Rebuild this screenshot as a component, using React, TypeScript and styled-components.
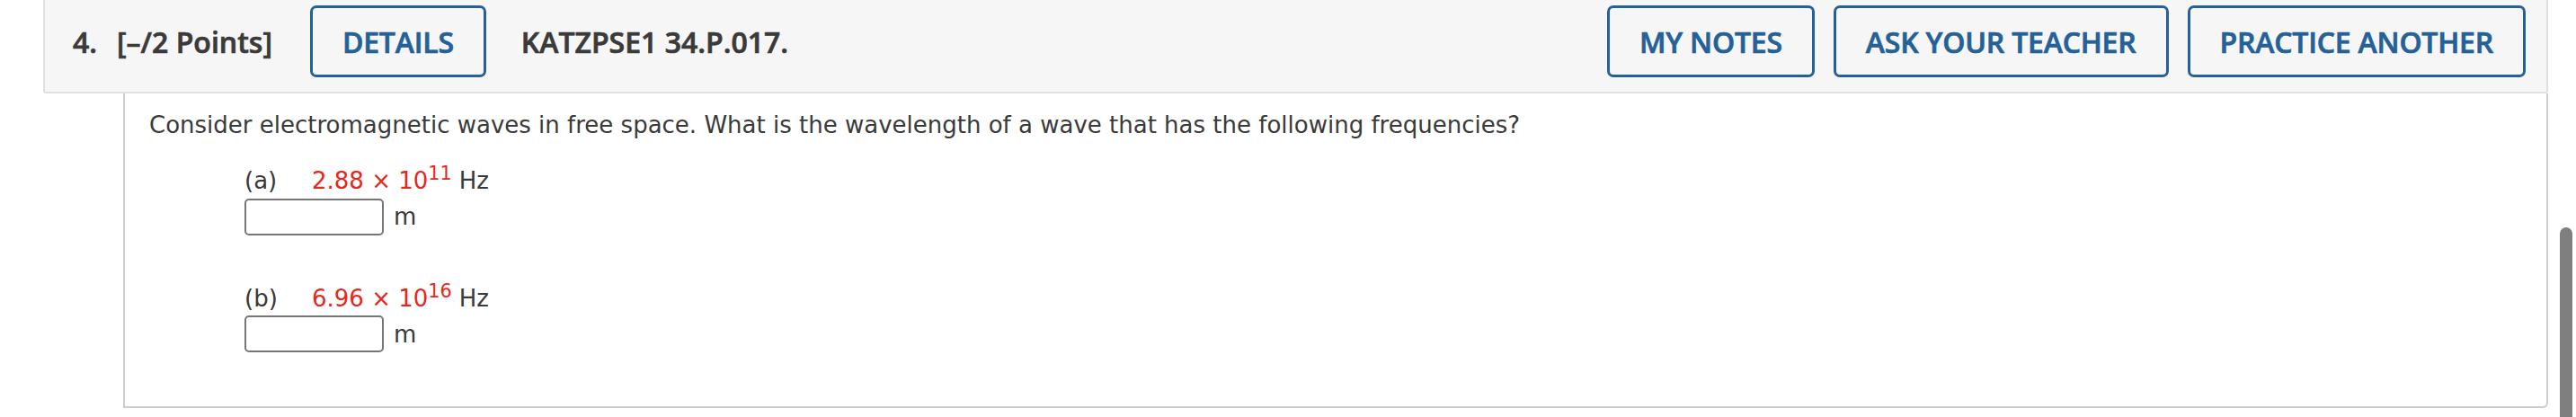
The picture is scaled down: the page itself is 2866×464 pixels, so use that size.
import React from "react";
import styled, { createGlobalStyle } from "styled-components";

const GlobalStyle = createGlobalStyle`
  html, body { margin: 0; padding: 0; background: #ffffff; }
  body { font-family: "DejaVu Sans", Verdana, sans-serif; overflow: hidden; }
`;

const Page = styled.div`
  padding: 0 31px 0 48px;
  width: 2866px;
  height: 464px;
  box-sizing: border-box;
`;

const Header = styled.div`
  display: flex;
  align-items: center;
  height: 104px;
  box-sizing: border-box;
  padding: 0 23px 10px 31px;
  background: #f6f6f6;
  border: 2px solid #e0e0e0;
  border-top: none;
  border-radius: 0 0 3px 3px;
  font-family: "Open Sans", "Liberation Sans", sans-serif;
  font-weight: 600;
  font-size: 32px;
  color: #3a3a3a;
  -webkit-text-stroke: 0.7px currentColor;
`;

const QNum = styled.span`
  margin-right: 22px;
`;

const Points = styled.span`
  margin-right: 42px;
`;

const Code = styled.span`
  margin-left: 39px;
  flex: 1;
`;

const Button = styled.button`
  height: 80px;
  box-sizing: border-box;
  padding: 0 33px;
  border: 3px solid #236198;
  border-radius: 7px;
  background: transparent;
  color: #236198;
  font-family: "Open Sans", "Liberation Sans", sans-serif;
  font-weight: 600;
  font-size: 32px;
  letter-spacing: -0.2px;
  -webkit-text-stroke: 0.7px currentColor;
  white-space: nowrap;
  & + & { margin-left: 21px; }
`;

const Panel = styled.div`
  margin-left: 89px;
  padding: 16px 27px 60px 27px;
  border: 2px solid #cdcdcd;
  border-top: none;
  border-radius: 0 0 6px 0;
  color: #3a3a3a;
  font-size: 26px;
  line-height: 38.4px;
`;

const Question = styled.p`
  margin: 0 0 24px 0;
`;

const Part = styled.div<{ $gap?: number }>`
  margin-left: 106px;
  margin-top: ${(p) => p.$gap ?? 0}px;
`;

const PartLine = styled.div`
  display: flex;
  align-items: baseline;
`;

const PartLabel = styled.span`
  width: 75px;
`;

const Red = styled.span`
  color: #e5271d;
  sup {
    font-size: 20.8px;
    line-height: 0;
  }
`;

const Unit = styled.span`
  margin-left: 8px;
`;

const AnswerRow = styled.div`
  display: flex;
  align-items: center;
`;

const Input = styled.input`
  width: 155px;
  height: 41px;
  box-sizing: border-box;
  border: 2px solid #767676;
  border-radius: 5px;
  background: #fff;
  margin: 0;
`;

const UnitM = styled.span`
  margin-left: 11px;
`;

const Scrollbar = styled.div`
  position: fixed;
  right: 4px;
  top: 253px;
  bottom: 0;
  width: 14px;
  border-radius: 7px 7px 0 0;
  background: #7f7f7f;
`;

const parts = [
  { label: "(a)", mant: "2.88", exp: "11" },
  { label: "(b)", mant: "6.96", exp: "16" },
];

export default function App() {
  return (
    <>
      <GlobalStyle />
      <Page>
        <Header>
          <QNum>4.</QNum>
          <Points>[–/2 Points]</Points>
          <Button>DETAILS</Button>
          <Code>KATZPSE1 34.P.017.</Code>
          <Button>MY NOTES</Button>
          <Button>ASK YOUR TEACHER</Button>
          <Button>PRACTICE ANOTHER</Button>
        </Header>
        <Panel>
          <Question>
            Consider electromagnetic waves in free space. What is the wavelength of a wave that has the following frequencies?
          </Question>
          {parts.map((p, i) => (
            <Part key={p.label} $gap={i === 0 ? 0 : 51}>
              <PartLine>
                <PartLabel>{p.label}</PartLabel>
                <Red>
                  {p.mant} × 10<sup>{p.exp}</sup>
                </Red>
                <Unit>Hz</Unit>
              </PartLine>
              <AnswerRow>
                <Input type="text" aria-label={`answer ${p.label}`} />
                <UnitM>m</UnitM>
              </AnswerRow>
            </Part>
          ))}
        </Panel>
        <Scrollbar />
      </Page>
    </>
  );
}
